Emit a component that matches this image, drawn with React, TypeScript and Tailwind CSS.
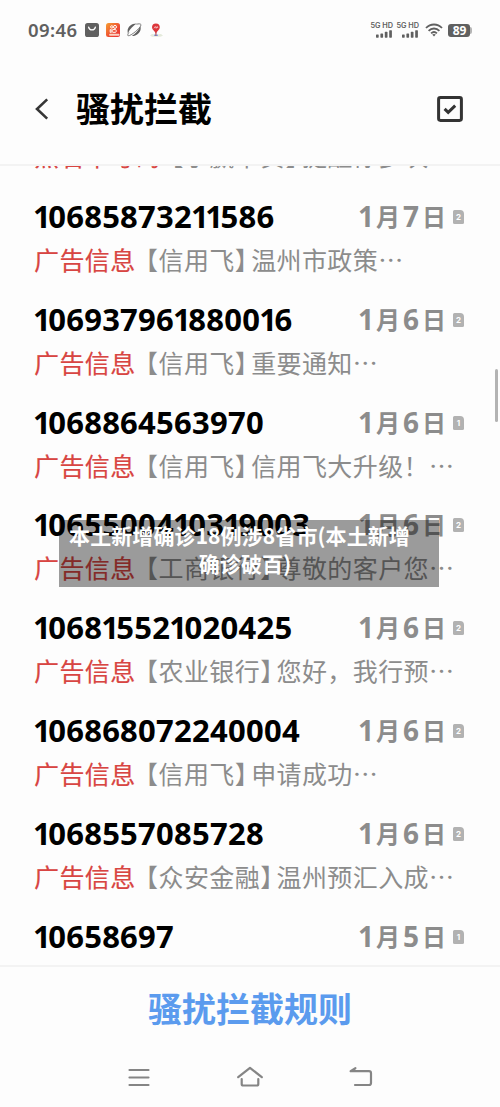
import React from "react";

type Preview = { tag: string; sender: string; body: string };

type Message = {
  number: string;
  day: [string, string];
  sim: string;
  preview?: Preview;
};

const earlier: Preview = { tag: "黑名单号码", sender: "小赢卡贷", body: "提醒你多次" };

const ad = (sender: string, body: string): Preview => ({ tag: "广告信息", sender, body });

const messages: Message[] = [
  { number: "10685873211586", day: ["1", "7"], sim: "2", preview: ad("信用飞", "温州市政策⋯") },
  { number: "106937961880016", day: ["1", "6"], sim: "2", preview: ad("信用飞", "重要通知⋯") },
  { number: "1068864563970", day: ["1", "6"], sim: "1", preview: ad("信用飞", "信用飞大升级！⋯") },
  { number: "1065500410319003", day: ["1", "6"], sim: "2", preview: ad("工商银行", "尊敬的客户您⋯") },
  { number: "106815521020425", day: ["1", "6"], sim: "2", preview: ad("农业银行", "您好，我行预⋯") },
  { number: "106868072240004", day: ["1", "6"], sim: "2", preview: ad("信用飞", "申请成功⋯") },
  { number: "1068557085728", day: ["1", "6"], sim: "2", preview: ad("众安金融", "温州预汇入成⋯") },
  { number: "10658697", day: ["1", "5"], sim: "1" },
];

function SimBadge({ label }: { label: string }) {
  return (
    <span className="ml-2 flex h-[14px] w-[11px] items-center justify-center rounded-[1.5px] rounded-tr-[4px] bg-[#b2b2b2] font-['Inter',sans-serif] text-[8px] leading-none font-bold text-white">
      {label}
    </span>
  );
}

/* The narrow figure 1 is tightened on both sides so that long numbers read as proportional. */
function PhoneNumber({ value }: { value: string }) {
  return (
    <span className="font-['Noto_Sans',sans-serif] text-[31px] leading-[42px] font-bold tracking-[0.25px] whitespace-nowrap text-black">
      {value.split(/(1)/).map((part, index) =>
        part === "1" ? (
          <span key={index} className="-mr-[2.8px] -ml-[1px]">
            {part}
          </span>
        ) : (
          part
        ),
      )}
    </span>
  );
}

function PreviewLine({ preview }: { preview: Preview }) {
  return (
    <p className="h-[44px] text-[25px] leading-[40px] tracking-[0.4px] whitespace-nowrap text-[#8c8c8c]">
      <span className="text-[#d84542] [-webkit-text-stroke:0.2px_#d84542]">{preview.tag}</span>
      <span className="-ml-[2.5px]">【</span>
      {preview.sender}
      <span className="-mr-[9px]">】</span>
      {preview.body}
    </p>
  );
}

function Row({ message }: { message: Message }) {
  const [month, day] = message.day;
  return (
    <li className="h-[102.8px] pr-9 pl-[34px]">
      <div className="flex h-[44px] items-center justify-between">
        <span className="flex h-[44px] items-start">
          <PhoneNumber value={message.number} />
        </span>
        <span className="flex items-center text-[#8c8c8c]">
          <span className="flex h-[44px] items-start font-['Noto_Sans_CJK_SC',sans-serif] text-[24px] leading-[42px] font-bold">
            <span className="w-[18px] font-['Noto_Sans',sans-serif] text-[28px]">{month}</span>
            <span className="w-[27px]">月</span>
            <span className="w-[19px] font-['Noto_Sans',sans-serif] text-[28px]">{day}</span>
            <span className="w-[23px]">日</span>
          </span>
          <SimBadge label={message.sim} />
        </span>
      </div>
      {message.preview && <PreviewLine preview={message.preview} />}
    </li>
  );
}

function Signal() {
  return (
    <span className="flex w-[23px] flex-col items-end">
      <span className="font-['Inter',sans-serif] text-[7.3px] leading-[8px] font-semibold whitespace-nowrap">5G HD</span>
      <svg width="18" height="8" viewBox="0 0 18 8" fill="currentColor">
        <rect x="1" y="4.5" width="2.7" height="3.2" rx="0.6" />
        <rect x="5.4" y="3.4" width="2.7" height="4.3" rx="0.6" />
        <rect x="9.8" y="1.8" width="2.7" height="5.9" rx="0.6" />
        <rect x="14.2" y="0.2" width="2.7" height="7.5" rx="0.6" />
      </svg>
    </span>
  );
}

function StatusBar() {
  return (
    <div className="flex h-[60px] items-center justify-between pr-[27px] pl-7 text-[#606060]">
      <div className="flex items-center">
        <span className="w-[57px] font-['Noto_Sans',sans-serif] text-[18.5px] leading-none font-semibold tracking-[0.4px]">09:46</span>
        <svg width="14" height="14" viewBox="0 0 14 14">
          <rect width="14" height="14" rx="2.6" fill="#606060" />
          <path d="M3.7 4.3c.8 3.4 5.8 3.4 6.6 0" fill="none" stroke="#fff" strokeWidth="1.4" strokeLinecap="round" />
        </svg>
        <svg className="ml-[7px]" width="14" height="14" viewBox="0 0 14 14">
          <defs>
            <linearGradient id="app" x1="0" y1="0" x2="1" y2="1">
              <stop offset="0" stopColor="#f6a032" />
              <stop offset="0.6" stopColor="#ee4b32" />
              <stop offset="1" stopColor="#e93236" />
            </linearGradient>
          </defs>
          <rect width="14" height="14" rx="2.5" fill="url(#app)" />
          <g fill="none" stroke="#fff" strokeWidth="1">
            <circle cx="5.8" cy="3.9" r="1.2" />
            <circle cx="9" cy="3.9" r="1.5" />
            <rect x="6.2" y="6.6" width="4" height="2.7" rx="0.8" />
            <path d="M6 7.2 4.2 6.6v2.8L6 8.8" />
          </g>
          <rect x="3.3" y="10.8" width="10" height="2" rx="0.5" fill="#fbd4c4" />
        </svg>
        <svg className="ml-[7px]" width="15" height="14" viewBox="0 0 15 14" fill="#606060">
          <path d="M.9 10.2C-.6 5.2 3.6.5 9.8.6 6.4 2.6 3 6 .9 10.2z" />
          <path d="M13.4 3.2c1.5 5-2.6 9.8-8.6 9.9 3.4-2.1 6.6-5.8 8.6-9.9z" />
          <path d="M9.4 1.3C11.7.5 14.2.7 14 2 13.5 5.2 3.5 13.2 1.2 12.8.2 12.3 1 10.8 1.9 9.4" fill="none" stroke="#606060" strokeWidth="0.8" />
        </svg>
        <svg className="ml-2" width="13" height="14" viewBox="0 0 13 14">
          <path d="M0 12.4 2 11l4 .8 5-.8 2 1.7-3 1.1H2z" fill="#e4eadb" />
          <path d="M4 12.3h4" stroke="#8aa9e5" strokeWidth="1.4" />
          <path d="M5.1 7h1.6l-.4 6h-.7z" fill="#a73137" />
          <path d="M5.9 10C4.6 8.2 2 6.7 2 4.3a3.9 3.9 0 0 1 7.8 0C9.8 6.7 7.2 8.2 5.9 10z" fill="#dc363b" />
          <path d="m4 5.3 1.3-1.8.9 1.8 1-1.8.7 1.5" fill="none" stroke="#fff" strokeWidth="0.6" />
        </svg>
      </div>
      <div className="flex items-center">
        <Signal />
        <span className="w-[3px]" />
        <Signal />
        <svg className="ml-[6px]" width="18" height="14" viewBox="0 0 18 14" fill="none" stroke="currentColor" strokeWidth="1.8">
          <path d="M1 5C5.5.3 12.5.3 17 5" />
          <path d="M3.6 7.8c3-3.1 7.8-3.1 10.8 0" />
          <path d="M6.1 10.4c1.7-1.7 4.1-1.7 5.8 0" />
          <path d="m7.2 11.6 1.8 2 1.8-2c-1-.9-2.6-.9-3.6 0z" fill="currentColor" stroke="none" />
        </svg>
        <span className="ml-[5px] flex h-[13px] w-[22px] items-center justify-center rounded-[3px] bg-[#606060] pt-[1px] pl-[1px] font-['Noto_Sans',sans-serif] text-[12px] leading-none font-bold text-white">
          89
        </span>
        <span className="mr-[1px] h-[7px] w-[2px] rounded-r-[2px] bg-[#b5b5b5]" />
      </div>
    </div>
  );
}

export default function App() {
  return (
    <div className="relative flex h-[1107px] w-[500px] flex-col overflow-hidden bg-[#fdfdfd] font-['Noto_Sans_CJK_SC',sans-serif]" lang="zh-CN">
      <StatusBar />
      <header className="flex h-[106px] shrink-0 items-center border-b-2 border-[#f3f3f3] pr-[37px] pb-[7px] pl-[35px]">
        <svg width="14" height="22" viewBox="0 0 14 22" fill="none" stroke="#363636" strokeWidth="2.6">
          <path d="M12.2 1.4 2 11l10.2 9.6" />
        </svg>
        <h1 className="ml-[27px] flex-1 pb-[1px] text-[34px] leading-none font-bold text-black">骚扰拦截</h1>
        <svg width="26" height="26" viewBox="0 0 26 26" fill="none" stroke="#333">
          <rect x="1.6" y="1.6" width="22.8" height="22.8" rx="1.8" strokeWidth="3" />
          <path d="m7.6 12.8 3.6 3.5 7-6.6" strokeWidth="3" />
        </svg>
      </header>
      <main className="h-[799px] shrink-0 overflow-hidden">
        <div className="-mt-[30.8px] h-[59.8px] pl-[34px]">
          <PreviewLine preview={earlier} />
        </div>
        <ul>
          {messages.map((message) => (
            <Row key={message.number} message={message} />
          ))}
        </ul>
      </main>
      <footer className="shrink-0 border-t-2 border-[#f3f3f3]">
        <div className="flex h-[84px] items-center justify-center pb-[3px] text-[34px] leading-none font-bold text-[#5b9bee]">骚扰拦截规则</div>
        <nav className="flex items-center justify-between px-[126px] pt-[14px] text-[#858585]">
          <svg width="26" height="26" viewBox="0 0 26 26" fill="none" stroke="currentColor" strokeWidth="2.2" strokeLinecap="round">
            <path d="M3.5 5h19M3.5 12.5h19M3.5 20h19" />
          </svg>
          <svg width="28" height="26" viewBox="0 0 28 26" fill="none" stroke="currentColor" strokeWidth="2.2" strokeLinecap="round" strokeLinejoin="round">
            <path d="M2.2 12.2 14 2.8l11.8 9.4" />
            <path d="M5.7 14v5a1.5 1.5 0 0 0 1.5 1.5h13.6a1.5 1.5 0 0 0 1.5-1.5v-5" />
          </svg>
          <svg width="26" height="26" viewBox="0 0 26 26" fill="none" stroke="currentColor" strokeWidth="2.2" strokeLinecap="round" strokeLinejoin="round">
            <path d="M7.4 3.2 2.6 6.2H21a2 2 0 0 1 2 2V18a2 2 0 0 1-2 2H7" />
          </svg>
        </nav>
      </footer>
      <div className="absolute top-[369px] right-[2px] h-[53px] w-[3px] rounded-full bg-[#b3b3b3]" />
      <div className="absolute top-[520px] left-[59px] flex h-[67px] w-[380px] flex-col items-center bg-black/39 pt-[1px] text-[21px] leading-7 font-bold tracking-[0.1px] whitespace-nowrap text-white">
        <span className="-ml-[19px]">本土新增确诊18例涉8省市(本土新增</span>
        <span className="-ml-[8px]">确诊破百)</span>
      </div>
    </div>
  );
}
